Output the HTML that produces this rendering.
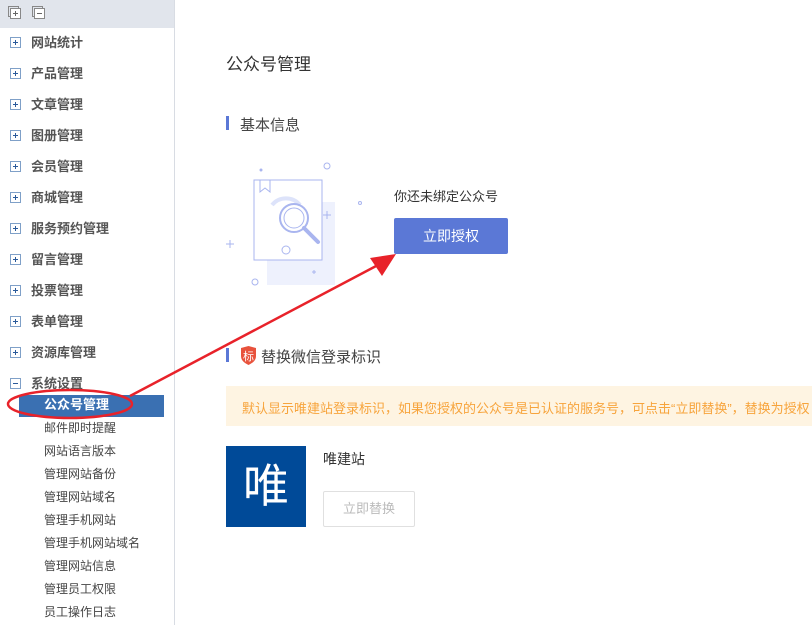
<!DOCTYPE html><html><head><meta charset="utf-8"><style>
body{margin:0;width:812px;height:625px;overflow:hidden;font-family:"Liberation Sans","Noto Sans CJK SC",sans-serif;background:#fff;position:relative}
.side{position:absolute;left:0;top:0;width:174px;height:625px;border-right:1px solid #d8dce3;background:#fff}
.top{height:28px;background:#e1e5ec}
.it{position:absolute;left:10px;font-size:13px;color:#555;font-weight:bold;line-height:16px}
.it i{display:inline-block;width:9px;height:9px;border:1px solid #7fa0c8;vertical-align:-1px;margin-right:10px;position:relative}
.it i:before{content:"";position:absolute;left:2px;top:4px;width:5px;height:1px;background:#2b5a9a}
.it i.p:after{content:"";position:absolute;left:4px;top:2px;width:1px;height:5px;background:#2b5a9a}
.sub{position:absolute;left:44px;font-size:12px;color:#444;line-height:14px}
.abs{position:absolute}
</style></head><body>
<div class="side"><div class="top"></div>
<svg class="abs" style="left:8px;top:6px" width="40" height="16"><rect x="0.5" y="0.5" width="10" height="10" fill="none" stroke="#888"/><rect x="2.5" y="2.5" width="10" height="10" fill="#fff" stroke="#888"/><path d="M5 7.5h5M7.5 5v5" stroke="#666"/><rect x="24.5" y="0.5" width="10" height="10" fill="none" stroke="#888"/><rect x="26.5" y="2.5" width="10" height="10" fill="#fff" stroke="#888"/><path d="M29 7.5h5" stroke="#666"/></svg>
<div class="it" style="top:35px"><i class="p"></i>网站统计</div>
<div class="it" style="top:66px"><i class="p"></i>产品管理</div>
<div class="it" style="top:97px"><i class="p"></i>文章管理</div>
<div class="it" style="top:128px"><i class="p"></i>图册管理</div>
<div class="it" style="top:159px"><i class="p"></i>会员管理</div>
<div class="it" style="top:190px"><i class="p"></i>商城管理</div>
<div class="it" style="top:221px"><i class="p"></i>服务预约管理</div>
<div class="it" style="top:252px"><i class="p"></i>留言管理</div>
<div class="it" style="top:283px"><i class="p"></i>投票管理</div>
<div class="it" style="top:314px"><i class="p"></i>表单管理</div>
<div class="it" style="top:345px"><i class="p"></i>资源库管理</div>
<div class="it" style="top:376px"><i></i>系统设置</div>
<div class="abs" style="left:19px;top:395px;width:145px;height:22px;background:#3a70b2"></div>
<div class="sub" style="top:398px;color:#fff;font-weight:bold;font-size:13px">公众号管理</div>
<div class="sub" style="top:421px">邮件即时提醒</div>
<div class="sub" style="top:444px">网站语言版本</div>
<div class="sub" style="top:467px">管理网站备份</div>
<div class="sub" style="top:490px">管理网站域名</div>
<div class="sub" style="top:513px">管理手机网站</div>
<div class="sub" style="top:536px">管理手机网站域名</div>
<div class="sub" style="top:559px">管理网站信息</div>
<div class="sub" style="top:582px">管理员工权限</div>
<div class="sub" style="top:605px">员工操作日志</div>
</div>
<div class="abs" style="left:226px;top:50px;font-size:17px;color:#333">公众号管理</div>
<div class="abs" style="left:226px;top:116px;width:3px;height:14px;background:#5b78d6"></div>
<div class="abs" style="left:240px;top:114px;font-size:15px;color:#444">基本信息</div>
<svg class="abs" style="left:222px;top:160px" width="145" height="130" fill="none" stroke="#a9b5ef">
<rect x="45" y="42" width="68" height="83" fill="#eef1fd" stroke="none"/>
<rect x="32" y="20" width="68" height="80" fill="#fff"/>
<path d="M38 20v12l5-4 5 4V20"/>
<path d="M50 45a18 18 0 0 1 28 0" stroke="#dde3fa" stroke-width="4"/>
<circle cx="72" cy="58" r="14" stroke-width="2"/><circle cx="72" cy="58" r="10"/>
<path d="M82 68l14 14" stroke-width="4" stroke-linecap="round"/>
<circle cx="64" cy="90" r="4"/><circle cx="105" cy="6" r="3"/><circle cx="138" cy="43" r="1.5"/><circle cx="33" cy="122" r="3"/><circle cx="39" cy="10" r="1" fill="#a9b5ef"/>
<path d="M101 55h8M105 51v8M4 84h8M8 80v8M90 112h4M92 110v4"/>
</svg>
<div class="abs" style="left:394px;top:186px;font-size:13px;color:#333">你还未绑定公众号</div>
<div class="abs" style="left:394px;top:218px;width:114px;height:36px;background:#5b78d6;border-radius:2px;color:#fff;font-size:14px;text-align:center;line-height:36px">立即授权</div>
<div class="abs" style="left:226px;top:348px;width:3px;height:14px;background:#5b78d6"></div>
<svg class="abs" style="left:240px;top:346px" width="17" height="19"><path d="M1 2l7.5-2 7.5 2v8c0 5-4 7-7.5 9C5 17 1 15 1 10z" fill="#e8523c"/><text x="8.5" y="14" font-size="11" fill="#fff" text-anchor="middle" font-family="Noto Sans CJK SC">标</text></svg>
<div class="abs" style="left:261px;top:346px;font-size:15px;color:#444">替换微信登录标识</div>
<div class="abs" style="left:226px;top:386px;width:586px;height:40px;background:#fef4e2"></div>
<div class="abs" style="left:242px;top:398px;font-size:13px;color:#f7a43c;white-space:nowrap">默认显示唯建站登录标识，如果您授权的公众号是已认证的服务号，可点击“立即替换”，替换为授权</div>
<div class="abs" style="left:226px;top:446px;width:80px;height:81px;background:#004a98;color:#fff;font-size:46px;text-align:center;line-height:80px">唯</div>
<div class="abs" style="left:323px;top:449px;font-size:14px;color:#333">唯建站</div>
<div class="abs" style="left:323px;top:491px;width:90px;height:34px;border:1px solid #e0e0e0;border-radius:2px;color:#bbb;font-size:13px;text-align:center;line-height:34px">立即替换</div>
<svg class="abs" style="left:0;top:0" width="812" height="625"><ellipse cx="70" cy="404" rx="62" ry="14" fill="none" stroke="#e8222a" stroke-width="2.5"/><path d="M130 396L378 265" stroke="#e8222a" stroke-width="2.5"/><path d="M396 254L370 258L382 276z" fill="#e8222a"/></svg>
</body></html>
